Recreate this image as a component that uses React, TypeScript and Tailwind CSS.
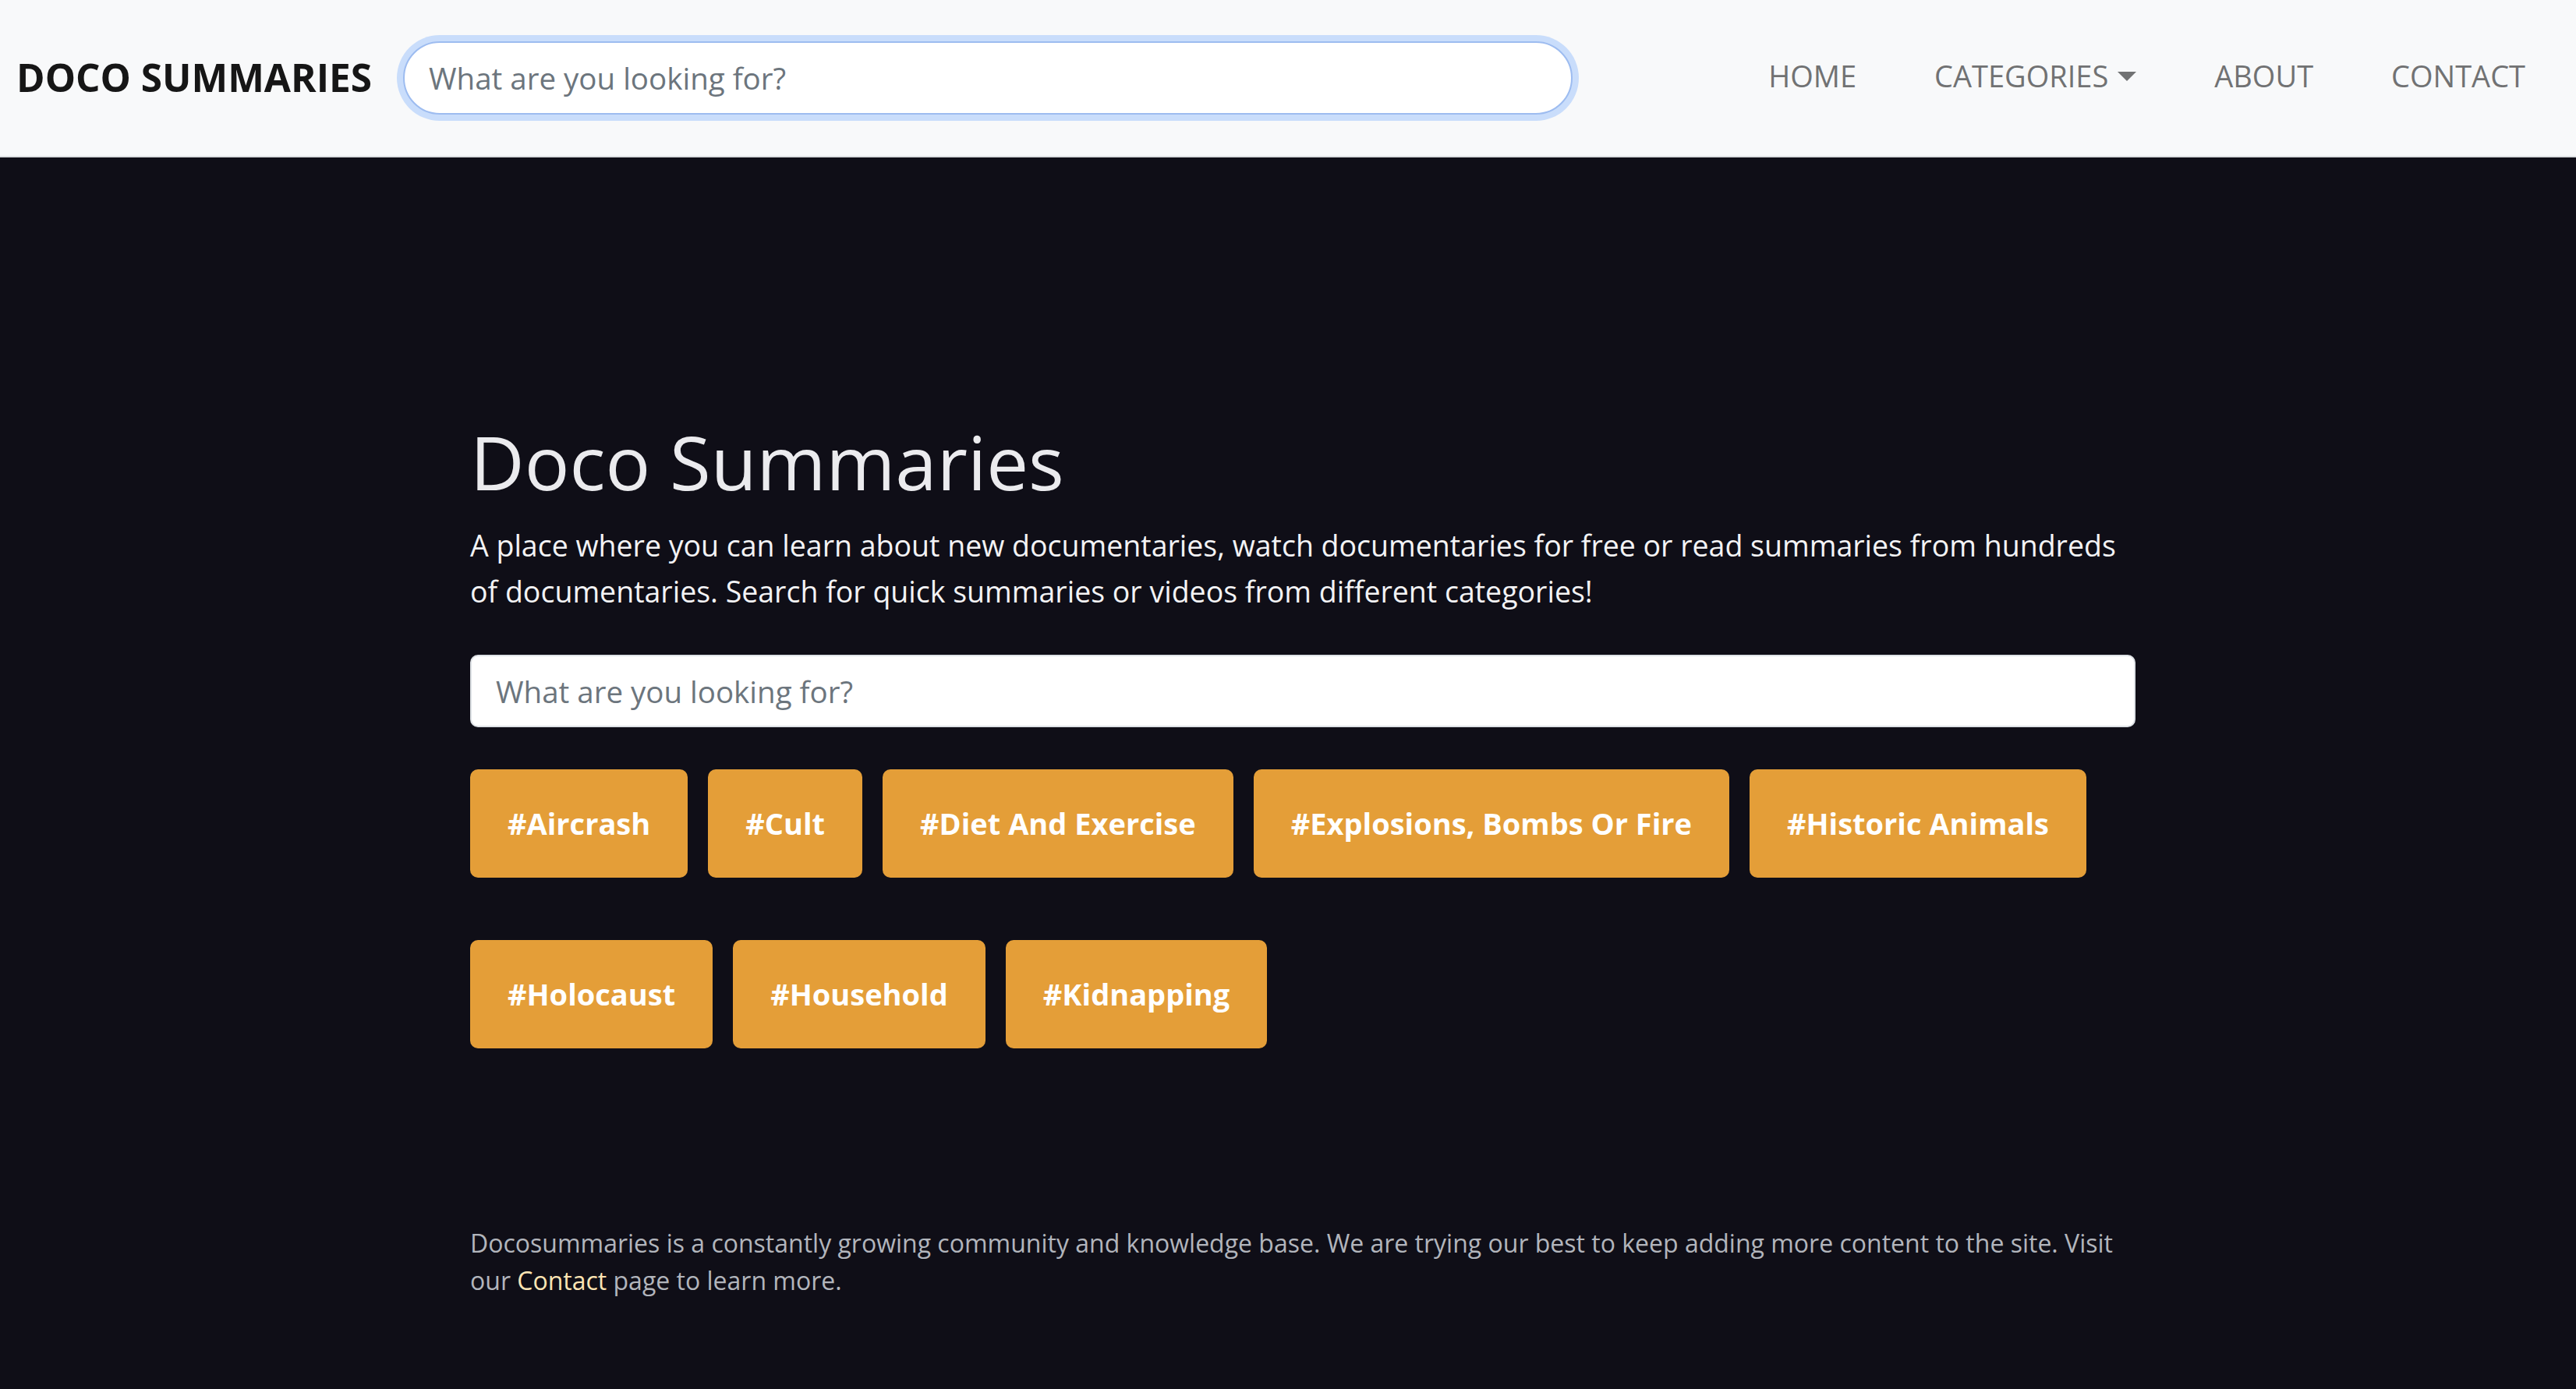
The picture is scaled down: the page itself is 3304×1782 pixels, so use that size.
import React from "react";

const tags = [
  "#Aircrash",
  "#Cult",
  "#Diet And Exercise",
  "#Explosions, Bombs Or Fire",
  "#Historic Animals",
  "#Holocaust",
  "#Household",
  "#Kidnapping",
];

export default function App() {
  return (
    <div className="min-h-screen bg-[#0f0e17] font-['Open_Sans',sans-serif]">
      {/* top navbar */}
      <nav className="flex h-[202px] items-center border-b-2 border-[#dcdee1] bg-[#f8f9fa] pl-[21px] pr-[65px]">
        <a href="#" className="text-[49.5px] font-bold leading-none text-[#161616]">
          DOCO SUMMARIES
        </a>
        <input
          type="text"
          placeholder="What are you looking for?"
          className="ml-[40px] h-[94px] w-[1500px] rounded-full border-2 border-[#9dbcf0] bg-white pl-[31px] text-[38.5px] text-[#212529] outline-none ring-[8px] ring-[#0d6efd]/20 placeholder:text-[#6c757d]"
        />
        <ul className="mb-[6px] ml-auto flex items-center gap-[100px] text-[38px] text-[#717273]">
          <li>HOME</li>
          <li className="flex items-center">
            CATEGORIES
            <span className="ml-[12px] mt-[2px] h-0 w-0 border-x-[12px] border-t-[12px] border-x-transparent border-t-[#717273]" />
          </li>
          <li>ABOUT</li>
          <li>CONTACT</li>
        </ul>
      </nav>

      <main className="ml-[603px] w-[2136px] pt-[330px] pb-[100px]">
        <h1 className="text-[96px] leading-[120px] text-[#ebebee]">Doco Summaries</h1>
        <p className="mt-[18px] text-[37.5px] leading-[59px] text-[#f3f3f5]">
          A place where you can learn about new documentaries, watch documentaries for free or
          read summaries from hundreds of documentaries. Search for quick summaries or videos from
          different categories!
        </p>

        <input
          type="text"
          placeholder="What are you looking for?"
          className="mt-[52px] h-[93px] w-full rounded-[10px] border-2 border-[#dee2e6] bg-white px-[31px] text-[38.5px] outline-none placeholder:text-[#6c757d]"
        />

        <div className="mt-[54px] flex flex-wrap gap-x-[26px] gap-y-[80px]">
          {tags.map((tag) => (
            <button
              key={tag}
              className="flex h-[139px] items-center rounded-[10px] bg-[#e49e38] px-[48px] text-[38px] font-bold text-white"
            >
              {tag}
            </button>
          ))}
        </div>

        <p className="mt-[226px] text-[32px] leading-[48px] text-[#b2b5bc]">
          Docosummaries is a constantly growing community and knowledge base. We are trying our
          best to keep adding more content to the site. Visit our{" "}
          <a href="#" className="text-[#fde5b4]">
            Contact
          </a>{" "}
          page to learn more.
        </p>
      </main>
    </div>
  );
}
